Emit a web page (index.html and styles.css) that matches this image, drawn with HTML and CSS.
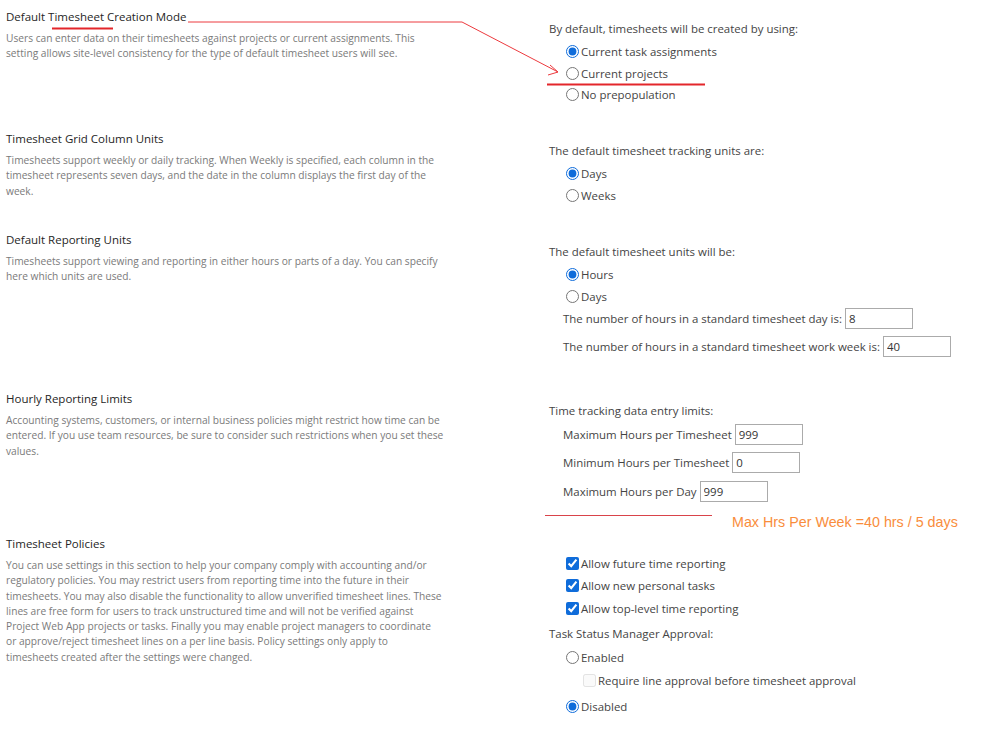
FILE: index.html
```html
<!DOCTYPE html>
<html lang="en">
<head>
    <meta charset="UTF-8">
    <title>Timesheet Settings</title>
    <link rel="stylesheet" href="styles.css">
</head>
<body>

    <div class="page">

        <!-- Default Timesheet Creation Mode -->
        <div class="section sec-creation">
            <div class="info">
                <h3>Default Timesheet Creation Mode</h3>
                <p>Users can enter data on their timesheets against projects or current assignments. This<br>setting allows site-level consistency for the type of default timesheet users will see.</p>
            </div>
            <div class="options">
                <div class="label">By default, timesheets will be created by using:</div>
                <label class="opt"><input type="radio" name="mode" checked>Current task assignments</label>
                <label class="opt"><input type="radio" name="mode">Current projects</label>
                <label class="opt"><input type="radio" name="mode">No prepopulation</label>
            </div>
        </div>

        <!-- Timesheet Grid Column Units -->
        <div class="section sec-grid">
            <div class="info">
                <h3>Timesheet Grid Column Units</h3>
                <p>Timesheets support weekly or daily tracking. When Weekly is specified, each column in the<br>timesheet represents seven days, and the date in the column displays the first day of the<br>week.</p>
            </div>
            <div class="options">
                <div class="label">The default timesheet tracking units are:</div>
                <label class="opt"><input type="radio" name="tracking" checked>Days</label>
                <label class="opt"><input type="radio" name="tracking">Weeks</label>
            </div>
        </div>

        <!-- Default Reporting Units -->
        <div class="section sec-reporting">
            <div class="info">
                <h3>Default Reporting Units</h3>
                <p>Timesheets support viewing and reporting in either hours or parts of a day. You can specify<br>here which units are used.</p>
            </div>
            <div class="options">
                <div class="label">The default timesheet units will be:</div>
                <label class="opt"><input type="radio" name="units" checked>Hours</label>
                <label class="opt"><input type="radio" name="units">Days</label>
                <div class="field">The number of hours in a standard timesheet day is: <input type="text" value="8"></div>
                <div class="field">The number of hours in a standard timesheet work week is: <input type="text" value="40"></div>
            </div>
        </div>

        <!-- Hourly Reporting Limits -->
        <div class="section sec-limits">
            <div class="info">
                <h3>Hourly Reporting Limits</h3>
                <p>Accounting systems, customers, or internal business policies might restrict how time can be<br>entered. If you use team resources, be sure to consider such restrictions when you set these<br>values.</p>
            </div>
            <div class="options">
                <div class="label tight">Time tracking data entry limits:</div>
                <div class="field">Maximum Hours per Timesheet <input type="text" value="999"></div>
                <div class="field">Minimum Hours per Timesheet <input type="text" value="0"></div>
                <div class="field">Maximum Hours per Day <input type="text" value="999"></div>
                <div class="note">
                    <span class="note-line"></span>
                    <span class="note-text">Max Hrs Per Week =40 hrs / 5 days</span>
                </div>
            </div>
        </div>

        <!-- Timesheet Policies -->
        <div class="section sec-policies">
            <div class="info">
                <h3>Timesheet Policies</h3>
                <p>You can use settings in this section to help your company comply with accounting and/or<br>regulatory policies. You may restrict users from reporting time into the future in their<br>timesheets. You may also disable the functionality to allow unverified timesheet lines. These<br>lines are free form for users to track unstructured time and will not be verified against<br>Project Web App projects or tasks. Finally you may enable project managers to coordinate<br>or approve/reject timesheet lines on a per line basis. Policy settings only apply to<br>timesheets created after the settings were changed.</p>
            </div>
            <div class="options">
                <label class="opt check"><input type="checkbox" checked>Allow future time reporting</label>
                <label class="opt check"><input type="checkbox" checked>Allow new personal tasks</label>
                <label class="opt check"><input type="checkbox" checked>Allow top-level time reporting</label>
                <div class="label approval">Task Status Manager Approval:</div>
                <label class="opt enabled"><input type="radio" name="approval">Enabled</label>
                <label class="opt sub disabled"><input type="checkbox" disabled>Require line approval before timesheet approval</label>
                <label class="opt last"><input type="radio" name="approval" checked>Disabled</label>
            </div>
        </div>

    </div>

    <!-- red hand-drawn markup over the page -->
    <svg class="markup" width="999" height="735" viewBox="0 0 999 735">
        <line x1="52" y1="28.5" x2="113" y2="28.5" stroke="#e3262b" stroke-width="2"/>
        <polyline points="188,22 462,22 558,72" fill="none" stroke="#ec3a3e" stroke-width="1"/>
        <polyline points="550,65 558,72 548,75" fill="none" stroke="#ec3a3e" stroke-width="1"/>
        <line x1="547" y1="84.5" x2="705" y2="84.5" stroke="#e3262b" stroke-width="2"/>
    </svg>

</body>
</html>
```

FILE: styles.css
```css
html, body {
    margin: 0;
    background: #ffffff;
}

body {
    position: relative;
    font-family: "Open Sans", "Noto Sans", sans-serif;
    color: #444;
}

.page {
    padding-top: 8px;
}

.section {
    display: grid;
    grid-template-columns: 543px 1fr;
    padding-left: 6px;
}

.sec-creation { height: 122px; }
.sec-grid { height: 101px; }
.sec-reporting { height: 159px; }
.sec-limits { height: 145px; }

/* left column */
.info h3 {
    margin: 0;
    font-size: 11.5px;
    font-weight: normal;
    color: #262626;
    line-height: 18px;
}

.info p {
    margin: 5px 0 0;
    font-size: 10.2px;
    line-height: 15.3px;
    color: #7a7a7a;
    white-space: nowrap;
}

/* right column */
.options {
    padding-top: 12px;
    font-size: 11.45px;
}

.label {
    line-height: 18px;
    margin-bottom: 3px;
}

.label.tight {
    margin-bottom: 0;
}

.opt {
    display: flex;
    align-items: center;
    height: 21.5px;
    padding-left: 17px;
}

.opt input {
    width: 13px;
    height: 13px;
    margin: 0 2px 0 0;
    accent-color: #0f6cda;
}

.sec-policies .options {
    padding-top: 17px;
}

.check {
    height: 22.5px;
}

.approval {
    margin-top: 5px;
    margin-bottom: 4px;
}

.enabled {
    height: 22px;
}

.sub {
    height: 24px;
    padding-left: 34px;
}

.last {
    height: 28px;
}

.disabled input {
    opacity: 0.6;
}

.field {
    display: flex;
    align-items: center;
    height: 28.5px;
    padding-left: 14px;
}

.opt + .field {
    margin-top: -3px;
}

.field input {
    width: 60px;
    height: 19px;
    margin-left: 3px;
    padding: 0 3px;
    border: 1px solid #ababab;
    font-family: inherit;
    font-size: 11.45px;
    color: #333;
}

.note {
    display: flex;
    align-items: flex-start;
    margin-left: -4px;
    margin-top: 8px;
}

.note-line {
    width: 167px;
    border-top: 1px solid #d9434a;
    margin-top: 1px;
}

.note-text {
    margin-left: 20px;
    font-family: "Liberation Sans", Arial, sans-serif;
    font-size: 14.3px;
    color: #f98d3c;
}

/* annotation layer */
.markup {
    position: absolute;
    top: 0;
    left: 0;
    pointer-events: none;
}
```
